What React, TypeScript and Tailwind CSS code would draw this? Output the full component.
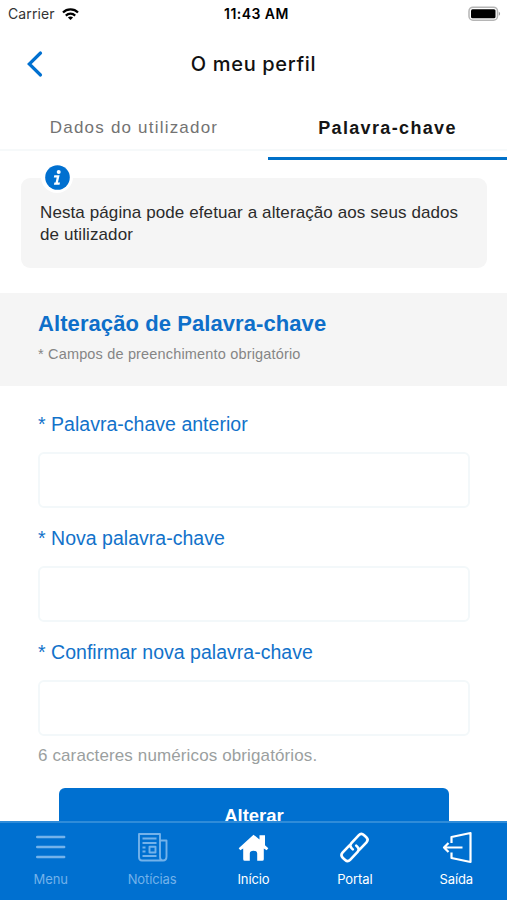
import React from "react";

const BLUE = "#0070d0";

function StatusBar() {
  return (
    <div className="flex h-7 items-center justify-between pl-2 pr-[6px] font-[Inter,sans-serif]">
      <div className="flex w-[150px] items-center gap-[7px]">
        <span className="text-[14px] leading-none tracking-[0.1px] text-[#333]">Carrier</span>
        <svg width="17" height="13" viewBox="0 0 17 13" fill="none" stroke="#000" strokeWidth="2.2">
          <path d="M1 4.6C5 .4 12 .4 16 4.6" />
          <path d="M3.8 7.6c2.7-2.6 6.700-2.600 9.400 0" />
          <path d="M5.900 9.400c1.500-1.300 3.700-1.300 5.200 0L8.500 12z" fill="#000" stroke="none" />
        </svg>
      </div>
      <span className="ml-1 text-[14px] font-semibold leading-none tracking-[0.450px] text-black">11:43 AM</span>
      <div className="flex w-[150px] justify-end">
        <svg width="33" height="16" viewBox="0 0 33 16">
          <rect x="1" y="1.200" width="28.500" height="13" rx="4" fill="#fff" stroke="#b5b5b5" strokeWidth="1.500" />
          <rect x="3" y="3.200" width="24.500" height="9" rx="1.500" fill="#000" />
          <path d="M30.800 5.800v4q1.300-.5 1.300-2t-1.300-2z" fill="#999" />
        </svg>
      </div>
    </div>
  );
}

function Header() {
  return (
    <header className="grid h-[72px] grid-cols-[60px_1fr_60px] items-center">
      <svg className="ml-[26px]" width="18" height="28" viewBox="0 0 18 28" fill="none" stroke={BLUE} strokeWidth="3.2" strokeLinecap="round">
        <path d="M14.500 3L3.300 14l11.200 11" />
      </svg>
      <h1 className="text-center font-[Inter,sans-serif] text-[20px] font-medium leading-none tracking-[0.650px] text-[#111]">
        O meu perfil
      </h1>
    </header>
  );
}

function Tabs() {
  return (
    <div className="h-[60px]">
      <div className="grid h-[51px] grid-cols-[268px_1fr] border-b-2 border-[#f6f9fa] text-center text-[17px] leading-[56px]">
        <span className="tracking-[1.200px] text-[#737373]">Dados do utilizador</span>
        <span className="text-[18px] font-bold tracking-[1.350px] text-[#151515]">Palavra-chave</span>
      </div>
      <div className="ml-[268px] mt-[6px] h-[3px] bg-[#0070c8]" />
    </div>
  );
}

function Notice() {
  return (
    <div className="relative ml-[21px] mr-5 mt-[18px] h-[90px] rounded-[9px] bg-[#f5f5f5] pl-[19px] pt-[24px]">
      <div className="absolute left-[20px] top-[-17px] flex size-8 items-center justify-center rounded-full bg-white">
        <svg width="25" height="25" viewBox="0 0 25 25">
          <circle cx="12.500" cy="12.500" r="12.300" fill={BLUE} />
          <circle cx="13.700" cy="7" r="2" fill="#fff" />
          <path d="M9.300 10.300h5.300l-1.700 7.300h2.100l-.5 2.200H8.900l.5-2.200h1.200l1.100-5.100H8.800z" fill="#fff" />
        </svg>
      </div>
      <p className="whitespace-nowrap text-[17px] leading-[22px] tracking-[0.100px] text-[#2b2b2b]">
        Nesta página pode efetuar a alteração aos seus dados
        <br />
        de utilizador
      </p>
    </div>
  );
}

function Field({ label }: { label: string }) {
  return (
    <label className="block h-[114px]">
      <span className="block h-[38px] whitespace-nowrap text-[19.500px] leading-[20px] tracking-[0.020px] text-[#1272ca]">{label}</span>
      <input type="password" className="block h-14 w-[432px] rounded-md border-2 border-[#f3f8fa] bg-white outline-none" />
    </label>
  );
}

const items = [
  {
    label: "Menu",
    dim: true,
    icon: <path d="M3.200 6h27M3.200 16h27M3.200 26h27" strokeWidth="2.400" strokeLinecap="round" />,
  },
  {
    label: "Notícias",
    dim: true,
    icon: (
      <g strokeWidth="1.900">
        <path d="M24 25.500V3H3v23q0 3.500 3 3.500h21q-3 0-3-4zM24 9.500h6.500v16q0 4-3.500 4" />
        <path d="M6.500 7.500h14M6.500 12h14M6.500 16.500h3M6.500 20.500h3M6.500 25h14" />
        <path d="M13.500 15.700h6v5.800h-6z" />
      </g>
    ),
  },
  {
    label: "Início",
    dim: false,
    icon: (
      <path
        d="M16.500 3.700L1.700 17.200l1.600 2 2.900-1.700v10.700q0 1.600 1.600 1.600h5v-7.300q0-2.800 3.700-2.800t3.700 2.800v7.300h5q1.600 0 1.600-1.600V17.500l2.900 1.700 1.600-2-3.300-3V4.200h-5.500v4.200z"
        fill="#fff"
        stroke="none"
      />
    ),
  },
  {
    label: "Portal",
    dim: false,
    icon: (
      <g strokeWidth="2.600" transform="rotate(-47 16.500 16.500)" strokeLinecap="round">
        <path d="M18.300 21.700H28.500q3.500 0 3.500-3.500v-3.400q0-3.500-3.500-3.500H17.500q-3.500 0-3.500 3.500V16.500" />
        <path d="M14.700 11.300H4.500q-3.500 0-3.500 3.500v3.400q0 3.500 3.500 3.500H15.500q3.500 0 3.500-3.500V16.500" />
      </g>
    ),
  },
  {
    label: "Saída",
    dim: false,
    icon: (
      <g strokeWidth="2.200">
        <path d="M11.500 12V6l19-4v29l-19-4v-5.500" />
        <path d="M22.500 16.500H4M8.500 12L4 16.500 8.500 21" />
      </g>
    ),
  },
];

function BottomNav() {
  return (
    <nav className="grid h-[79px] grid-cols-5 border-t-2 border-[#2f8cd9] bg-[#0070d0] font-[Inter,sans-serif]">
      {items.map((it) => (
        <div key={it.label} className={`flex flex-col items-center pt-[8px] ${it.dim ? "text-[#73b2ea]" : "text-white"}`}>
          <svg className="overflow-visible" width="33" height="33" viewBox="0 0 33 33" fill="none" stroke="currentColor" strokeLinejoin="round">
            {it.icon}
          </svg>
          <span className="mt-[8px] text-[13px] leading-[14px] tracking-[-0.100px]">{it.label}</span>
        </div>
      ))}
    </nav>
  );
}

export default function App() {
  return (
    <div className="flex h-[900px] w-[507px] flex-col overflow-hidden bg-white font-['Liberation_Sans',Arial,sans-serif]">
      <StatusBar />
      <Header />
      <main className="min-h-0 flex-1 overflow-hidden">
        <Tabs />
        <Notice />
        <section className="mt-[25px] h-[93px] bg-[#f5f5f5] pl-[38px] pt-[18px]">
          <h2 className="whitespace-nowrap text-[22px] font-bold leading-[26px] tracking-[0.080px] text-[#0e6fc9]">Alteração de Palavra-chave</h2>
          <p className="mt-[8px] whitespace-nowrap text-[14.500px] leading-[18px] tracking-[0.170px] text-[#858585]">* Campos de preenchimento obrigatório</p>
        </section>
        <form className="flex flex-col pl-[38px] pt-[28px]">
          <Field label="* Palavra-chave anterior" />
          <Field label="* Nova palavra-chave" />
          <Field label="* Confirmar nova palavra-chave" />
          <p className="-mt-[10px] h-[42px] whitespace-nowrap text-[17px] leading-[19px] tracking-[0.120px] text-[#9b9f9f]">6 caracteres numéricos obrigatórios.</p>
          <button type="button" className="ml-[21px] h-14 w-[390px] rounded-md bg-[#0070d0] text-[18.500px] font-bold leading-none text-white">
            Alterar
          </button>
        </form>
      </main>
      <BottomNav />
    </div>
  );
}
